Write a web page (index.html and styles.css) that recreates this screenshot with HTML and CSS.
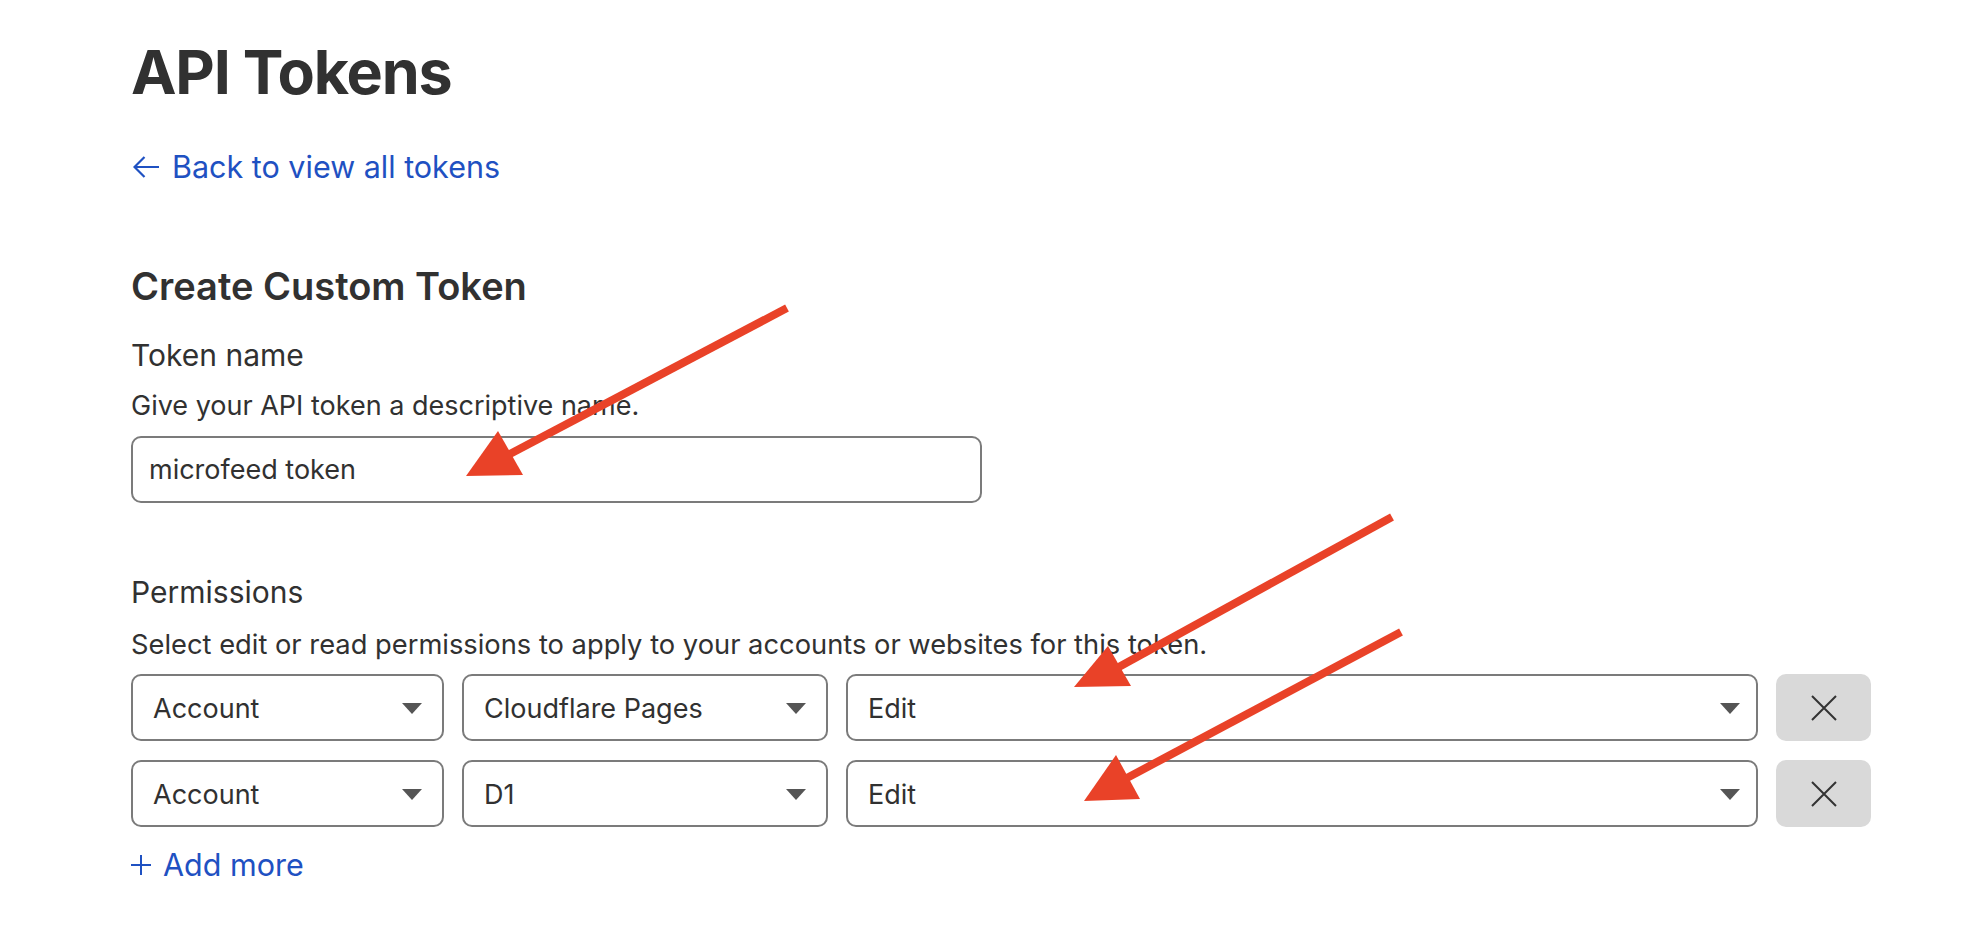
FILE: index.html
```html
<!DOCTYPE html>
<html lang="en">

<head>
  <meta charset="UTF-8">
  <meta name="viewport" content="width=device-width, initial-scale=1.0">
  <title>API Tokens</title>
  <link rel="stylesheet" href="styles.css">
</head>

<body>

  <main class="page">
    <h1 class="page-title">API Tokens</h1>

    <a class="back-link" href="#">
      <svg class="back-icon" width="26" height="22" viewBox="0 0 26 22">
        <path d="M11.5 1 L1.5 11 L11.5 21 M1.5 11 H26" fill="none" stroke="currentColor" stroke-width="2.2" />
      </svg>
      Back to view all tokens
    </a>

    <form class="token-form">
      <h2 class="form-title">Create Custom Token</h2>

      <!-- Token name -->
      <div class="field">
        <label class="field-label" for="tokenName">Token name</label>
        <p class="field-help">Give your API token a descriptive name.</p>
        <div class="text-input" id="tokenName">microfeed token</div>
      </div>

      <!-- Permissions -->
      <div class="field field-permissions">
        <label class="field-label">Permissions</label>
        <p class="field-help">Select edit or read permissions to apply to your accounts or websites for this token.</p>

        <div class="perm-rows">
          <div class="perm-row">
            <div class="select">Account<span class="caret"></span></div>
            <div class="select">Cloudflare Pages<span class="caret"></span></div>
            <div class="select select-wide">Edit<span class="caret"></span></div>
            <button type="button" class="remove-btn" aria-label="Remove">
              <svg width="26" height="26" viewBox="0 0 26 26">
                <path d="M1 1 L25 25 M25 1 L1 25" stroke="#333" stroke-width="2" />
              </svg>
            </button>
          </div>
          <div class="perm-row">
            <div class="select">Account<span class="caret"></span></div>
            <div class="select">D1<span class="caret"></span></div>
            <div class="select select-wide">Edit<span class="caret"></span></div>
            <button type="button" class="remove-btn" aria-label="Remove">
              <svg width="26" height="26" viewBox="0 0 26 26">
                <path d="M1 1 L25 25 M25 1 L1 25" stroke="#333" stroke-width="2" />
              </svg>
            </button>
          </div>
        </div>

        <a class="add-more" href="#">
          <svg width="20" height="20" viewBox="0 0 20 20">
            <path d="M10 0 V20 M0 10 H20" stroke="currentColor" stroke-width="2" />
          </svg>
          Add more
        </a>
      </div>
    </form>
  </main>

  <!-- red annotation arrows drawn over the screenshot -->
  <svg class="annotations" width="1980" height="940" viewBox="0 0 1980 940">
    <g fill="#e94228" stroke="#e94228">
      <line x1="787" y1="308" x2="508" y2="455" stroke-width="8" />
      <polygon points="466,476 498,431 523,475" stroke="none" />

      <line x1="1392" y1="517" x2="1117" y2="668" stroke-width="8" />
      <polygon points="1074,687 1108,646 1131,686" stroke="none" />

      <line x1="1401" y1="632" x2="1125" y2="779" stroke-width="8" />
      <polygon points="1084,801 1116,755 1140,799" stroke="none" />
    </g>
  </svg>

</body>

</html>
```

FILE: styles.css
```css
body {
  margin: 0;
  background-color: #fff;
  font-family: Inter, "Noto Sans", sans-serif;
  color: #313131;
}

.page {
  width: 1740px;
  padding: 34px 0 0 131px;
}

.page-title {
  margin: 0;
  font-size: 61px;
  line-height: 76px;
  font-weight: 700;
  letter-spacing: -1.2px;
}

.back-link {
  display: flex;
  align-items: center;
  gap: 13px;
  width: max-content;
  margin-top: 39px;
  font-size: 30.5px;
  line-height: 36px;
  color: #1f51c2;
  text-decoration: none;
}

.back-icon {
  margin-left: 2px;
}

.token-form {
  margin-top: 79px;
}

.form-title {
  margin: 0;
  font-size: 38px;
  line-height: 44px;
  font-weight: 600;
}

.field {
  margin-top: 29px;
}

.field-label {
  display: block;
  font-size: 30px;
  line-height: 36px;
}

.field-help {
  margin: 17px 0 0;
  font-size: 27px;
  line-height: 32px;
}

.text-input {
  box-sizing: border-box;
  width: 851px;
  height: 67px;
  margin-top: 14px;
  padding: 0 16px;
  border: 2px solid #7b7b7b;
  border-radius: 10px;
  font-size: 27px;
  line-height: 63px;
}

.field-permissions {
  margin-top: 71px;
}

.field-permissions .field-help {
  margin-top: 19px;
  font-size: 27.3px;
}

.perm-rows {
  display: flex;
  flex-direction: column;
  gap: 19px;
  margin-top: 13px;
}

.perm-row {
  display: grid;
  grid-template-columns: 313px 366px 912px 95px;
  gap: 18px;
  height: 67px;
}

.select {
  box-sizing: border-box;
  display: flex;
  align-items: center;
  justify-content: space-between;
  padding: 2px 20px 0;
  border: 2px solid #7b7b7b;
  border-radius: 10px;
  font-size: 27px;
}

.select-wide {
  padding-right: 16px;
}

.caret {
  width: 0;
  height: 0;
  border-left: 10px solid transparent;
  border-right: 10px solid transparent;
  border-top: 11px solid #555;
}

.remove-btn {
  display: flex;
  align-items: center;
  justify-content: center;
  padding: 0;
  border: none;
  border-radius: 10px;
  background-color: #d9d9d9;
}

.add-more {
  display: flex;
  align-items: center;
  gap: 12px;
  width: max-content;
  margin-top: 20px;
  font-size: 30.5px;
  line-height: 36px;
  color: #1f51c2;
  text-decoration: none;
}

.annotations {
  position: absolute;
  top: 0;
  left: 0;
  pointer-events: none;
}
```
